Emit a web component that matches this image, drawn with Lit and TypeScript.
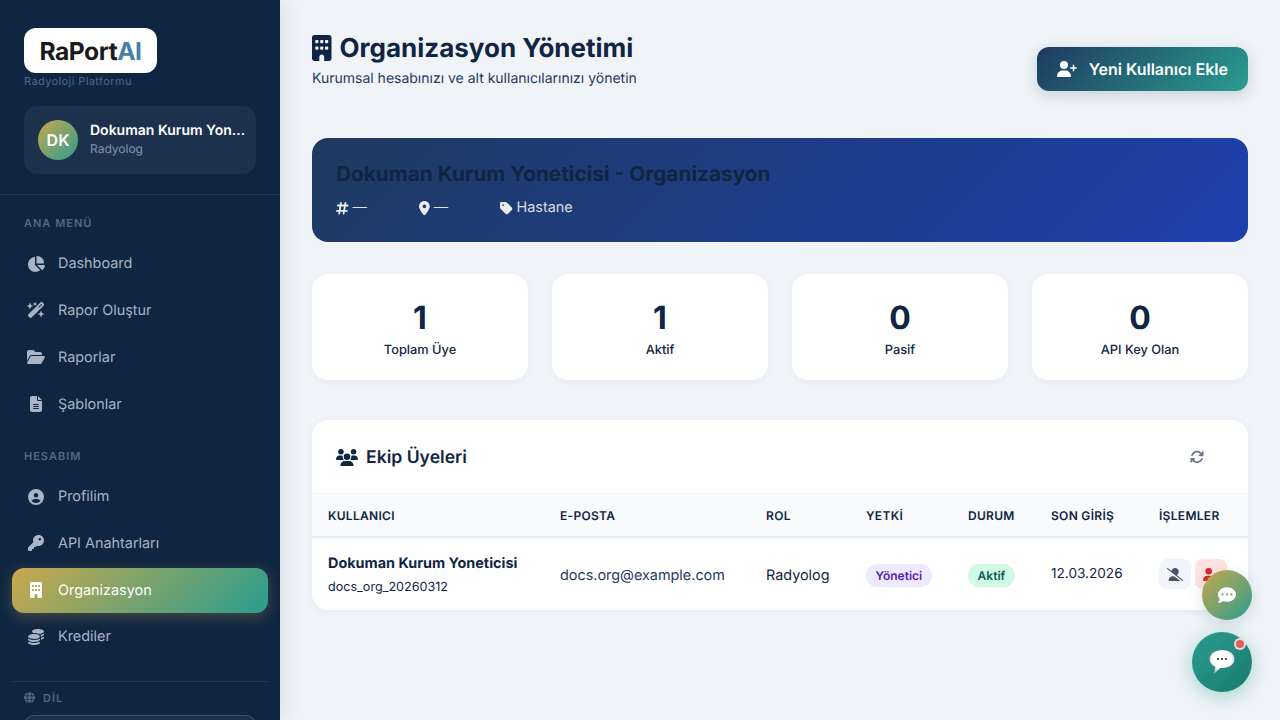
import { LitElement, html, css } from "lit";
import { customElement } from "lit/decorators.js";

const ICONS: Record<string, [string, string]> = {
  building: ["0 0 384 512", "M48 0C21.5 0 0 21.5 0 48V464c0 26.5 21.5 48 48 48h96V432c0-26.5 21.5-48 48-48s48 21.5 48 48v80h96c26.5 0 48-21.5 48-48V48c0-26.5-21.5-48-48-48H48zM64 240c0-8.8 7.2-16 16-16h32c8.8 0 16 7.2 16 16v32c0 8.8-7.2 16-16 16H80c-8.8 0-16-7.2-16-16V240zm112-16h32c8.8 0 16 7.2 16 16v32c0 8.8-7.2 16-16 16H176c-8.8 0-16-7.2-16-16V240c0-8.8 7.2-16 16-16zm80 16c0-8.8 7.2-16 16-16h32c8.8 0 16 7.2 16 16v32c0 8.8-7.2 16-16 16H272c-8.8 0-16-7.2-16-16V240zM80 96h32c8.8 0 16 7.2 16 16v32c0 8.8-7.2 16-16 16H80c-8.8 0-16-7.2-16-16V112c0-8.8 7.2-16 16-16zm80 16c0-8.8 7.2-16 16-16h32c8.8 0 16 7.2 16 16v32c0 8.8-7.2 16-16 16H176c-8.8 0-16-7.2-16-16V112zM272 96h32c8.8 0 16 7.2 16 16v32c0 8.8-7.2 16-16 16H272c-8.8 0-16-7.2-16-16V112c0-8.8 7.2-16 16-16z"],
  pie: ["0 0 576 512", "M304 240V16.6c0-9 7-16.6 16-16.6C443.7 0 544 100.3 544 224c0 9-7.6 16-16.6 16H304zM32 272C32 150.7 122.1 50.3 239 34.3c9.2-1.3 17 6.1 17 15.4V288L412.5 444.5c6.7 6.7 6.2 17.7-1.5 23.1C371.8 495.6 323.8 512 272 512C139.5 512 32 404.6 32 272zm526.4 16c9.3 0 16.6 7.8 15.4 17c-7.7 55.9-34.6 105.6-73.9 142.3c-6 5.6-15.4 5.2-21.2-.7L320 288H558.4z"],
  wand: ["0 0 576 512", "M234.7 42.7L197 56.8c-3 1.1-5 4-5 7.2s2 6.1 5 7.2l37.7 14.1L248.8 123c1.1 3 4 5 7.2 5s6.1-2 7.2-5l14.1-37.7L315 71.2c3-1.1 5-4 5-7.2s-2-6.1-5-7.2L277.3 42.7 263.2 5c-1.1-3-4-5-7.2-5s-6.1 2-7.2 5L234.7 42.7zM46.1 395.4c-18.7 18.7-18.7 49.1 0 67.9l34.6 34.6c18.7 18.7 49.1 18.7 67.9 0L529.9 116.5c18.7-18.7 18.7-49.1 0-67.9L495.3 14.1c-18.7-18.7-49.1-18.7-67.9 0L46.1 395.4zM484.6 82.6l-105 105-23.3-23.3 105-105 23.3 23.3zM7.5 117.2C3 118.9 0 123.2 0 128s3 9.1 7.5 10.8L64 160l21.2 56.5c1.7 4.5 6 7.5 10.8 7.5s9.1-3 10.8-7.5L128 160l56.5-21.2c4.5-1.7 7.5-6 7.5-10.8s-3-9.1-7.5-10.8L128 96 106.8 39.5C105.1 35 100.8 32 96 32s-9.1 3-10.8 7.5L64 96 7.5 117.2zm352 256c-4.5 1.7-7.5 6-7.5 10.8s3 9.1 7.5 10.8L416 416l21.2 56.5c1.7 4.5 6 7.5 10.8 7.5s9.1-3 10.8-7.5L480 416l56.5-21.2c4.5-1.7 7.5-6 7.5-10.8s-3-9.1-7.5-10.8L480 352l-21.2-56.5c-1.7-4.5-6-7.5-10.8-7.5s-9.1 3-10.8 7.5L416 352l-56.5 21.2z"],
  folder: ["0 0 576 512", "M88.7 223.8L0 375.8V96C0 60.7 28.7 32 64 32H181.5c17 0 33.3 6.7 45.3 18.7l26.5 26.5c12 12 28.3 18.7 45.3 18.7H416c35.3 0 64 28.7 64 64v32H144c-22.8 0-43.8 12.1-55.3 31.8zm27.6 16.1C122.1 230 132.6 224 144 224H544c11.5 0 22 6.1 27.7 16.1s5.7 22.2-.1 32.1l-112 192C453.9 474 443.4 480 432 480H32c-11.5 0-22-6.1-27.7-16.1s-5.7-22.2 .1-32.1l112-192z"],
  file: ["0 0 384 512", "M64 0C28.7 0 0 28.7 0 64V448c0 35.3 28.7 64 64 64H320c35.3 0 64-28.7 64-64V160H256c-17.7 0-32-14.3-32-32V0H64zM256 0V128H384L256 0zM112 256H272c8.8 0 16 7.2 16 16s-7.2 16-16 16H112c-8.8 0-16-7.2-16-16s7.2-16 16-16zm0 64H272c8.8 0 16 7.2 16 16s-7.2 16-16 16H112c-8.8 0-16-7.2-16-16s7.2-16 16-16zm0 64H272c8.8 0 16 7.2 16 16s-7.2 16-16 16H112c-8.8 0-16-7.2-16-16s7.2-16 16-16z"],
  profile: ["0 0 512 512", "M399 384.2C376.9 345.8 335.4 320 288 320H224c-47.4 0-88.9 25.8-111 64.2c35.2 39.2 86.2 63.8 143 63.8s107.8-24.7 143-63.8zM0 256a256 256 0 1 1 512 0A256 256 0 1 1 0 256zm256 16a72 72 0 1 0 0-144 72 72 0 1 0 0 144z"],
  key: ["0 0 512 512", "M336 352c97.2 0 176-78.8 176-176S433.2 0 336 0S160 78.8 160 176c0 18.7 2.9 36.8 8.3 53.7L7 391c-4.5 4.5-7 10.6-7 17v80c0 13.3 10.7 24 24 24h80c13.3 0 24-10.7 24-24V448h40c13.3 0 24-10.7 24-24V384h40c6.4 0 12.5-2.5 17-7l33.3-33.3c16.9 5.4 35 8.3 53.7 8.3zM376 96a40 40 0 1 1 0 80 40 40 0 1 1 0-80z"],
  coins: ["0 0 512 512", "M512 80c0 18-14.3 34.6-38.4 48c-29.1 16.1-72.5 27.5-122.3 30.9c-3.7-1.8-7.4-3.5-11.3-5C300.6 137.4 248.2 128 192 128c-8.3 0-16.4 .2-24.5 .6l-1.1-.6C142.3 114.6 128 98 128 80c0-44.2 86-80 192-80S512 35.8 512 80zM160.7 161.1c10.2-.7 20.7-1.1 31.3-1.1c62.2 0 117.4 12.3 152.5 31.4C369.3 204.9 384 221.7 384 240c0 4-.7 7.9-2.1 11.7c-4.6 13.2-17 25.3-35 35.5c-.1 .1-.3 .1-.4 .2c-.3 .2-.6 .3-.9 .5c-35 19.4-90.8 32-153.6 32c-59.6 0-112.9-11.3-148.2-29.1c-1.9-.9-3.7-1.9-5.5-2.9C14.3 274.6 0 258 0 240c0-34.8 53.4-64.5 128-75.4c10.5-1.5 21.4-2.7 32.7-3.5zM416 240c0-21.9-10.6-39.9-24.1-53.4c28.3-4.4 54.2-11.4 76.2-20.5c16.3-6.8 31.5-15.2 43.9-25.5V176c0 19.3-16.5 37.1-43.8 50.9c-14.6 7.4-32.4 13.7-52.4 18.5c.1-1.8 .2-3.5 .2-5.3zm-32 96c0 18-14.3 34.6-38.4 48c-1.8 1-3.6 1.9-5.5 2.9C304.9 404.7 251.6 416 192 416c-62.8 0-118.6-12.6-153.6-32C14.3 370.6 0 354 0 336V300.6c12.5 10.3 27.6 18.7 43.9 25.5C83.4 342.6 135.8 352 192 352s108.6-9.4 148.1-25.9c7.8-3.2 15.3-6.9 22.4-10.9c6.1-3.4 11.8-7.2 17.2-11.2c1.5-1.1 2.9-2.3 4.3-3.4V304v5.7V336zm32 0V304 278.1c19-4.2 36.5-9.5 52.1-16c16.3-6.8 31.5-15.2 43.9-25.5V272c0 10.5-5 21-14.9 30.9c-16.3 16.3-45 29.7-81.3 38.4c.1-1.7 .2-3.5 .2-5.3zM192 448c56.2 0 108.6-9.4 148.1-25.9c16.3-6.8 31.5-15.2 43.9-25.5V432c0 44.2-86 80-192 80S0 476.2 0 432V396.6c12.5 10.3 27.6 18.7 43.9 25.5C83.4 438.6 135.8 448 192 448z"],
  globe: ["0 0 512 512", "M352 256c0 22.2-1.2 43.6-3.3 64H163.3c-2.2-20.4-3.3-41.8-3.3-64s1.2-43.6 3.3-64H348.7c2.2 20.4 3.3 41.8 3.3 64zm28.8-64H503.9c5.3 20.5 8.1 41.9 8.1 64s-2.8 43.5-8.1 64H380.8c2.1-20.6 3.2-42 3.2-64s-1.1-43.4-3.2-64zm112.6-32H376.7c-10-63.9-29.8-117.4-55.3-151.6c78.3 20.7 142 77.5 171.9 151.6zm-149.1 0H167.7c6.1-36.4 15.5-68.6 27-94.7c10.5-23.6 22.2-40.7 33.5-51.5C239.4 3.2 248.7 0 256 0s16.6 3.2 27.8 13.8c11.3 10.8 23 27.9 33.5 51.5c11.6 26 20.9 58.2 27 94.7zm-209 0H18.6C48.6 85.9 112.2 29.1 190.6 8.4C165.1 42.6 145.3 96.1 135.3 160zM8.1 192H131.2c-2.1 20.6-3.2 42-3.2 64s1.1 43.4 3.2 64H8.1C2.8 299.5 0 278.1 0 256s2.8-43.5 8.1-64zM194.7 446.6c-11.6-26-20.9-58.2-27-94.6H344.3c-6.1 36.4-15.5 68.6-27 94.6c-10.5 23.6-22.2 40.7-33.5 51.5C272.6 508.8 263.3 512 256 512s-16.6-3.2-27.8-13.8c-11.3-10.8-23-27.9-33.5-51.5zM135.3 352c10 63.9 29.8 117.4 55.3 151.6C112.2 482.9 48.6 426.1 18.6 352H135.3zm358.1 0c-30 74.1-93.6 130.9-171.9 151.6c25.5-34.2 45.2-87.7 55.3-151.6H493.4z"],
  userPlus: ["0 0 640 512", "M96 128a128 128 0 1 1 256 0A128 128 0 1 1 96 128zM0 482.3C0 383.8 79.8 304 178.3 304h91.4C368.2 304 448 383.8 448 482.3c0 16.4-13.3 29.7-29.7 29.7H29.7C13.3 512 0 498.7 0 482.3zM504 312V248H440c-13.3 0-24-10.7-24-24s10.7-24 24-24h64V136c0-13.3 10.7-24 24-24s24 10.7 24 24v64h64c13.3 0 24 10.7 24 24s-10.7 24-24 24H552v64c0 13.3-10.7 24-24 24s-24-10.7-24-24z"],
  hash: ["0 0 448 512", "M181.3 32.4c17.4 2.9 29.2 19.4 26.3 36.8L197.8 128h95.1l11.5-69.3c2.9-17.4 19.4-29.2 36.8-26.3s29.2 19.4 26.3 36.8L357.8 128H416c17.7 0 32 14.3 32 32s-14.3 32-32 32H347.1L325.8 320H384c17.7 0 32 14.3 32 32s-14.3 32-32 32H315.1l-11.5 69.3c-2.9 17.4-19.4 29.2-36.8 26.3s-29.2-19.4-26.3-36.8l9.8-58.7H155.1l-11.5 69.3c-2.9 17.4-19.4 29.2-36.8 26.3s-29.2-19.4-26.3-36.8L90.2 384H32c-17.7 0-32-14.3-32-32s14.3-32 32-32h68.9l21.3-128H64c-17.7 0-32-14.3-32-32s14.3-32 32-32h68.9l11.5-69.3c2.9-17.4 19.4-29.2 36.8-26.3zM187.1 192L165.8 320h95.1l21.3-128H187.1z"],
  pin: ["0 0 384 512", "M215.7 499.2C267 435 384 279.4 384 192C384 86 298 0 192 0S0 86 0 192c0 87.4 117 243 168.3 307.2c12.3 15.3 35.1 15.3 47.4 0zM192 128a64 64 0 1 1 0 128 64 64 0 1 1 0-128z"],
  tag: ["0 0 448 512", "M0 80V229.5c0 17 6.7 33.3 18.7 45.3l176 176c25 25 65.5 25 90.5 0L418.7 317.3c25-25 25-65.5 0-90.5l-176-176c-12-12-28.3-18.7-45.3-18.7H48C21.5 32 0 53.5 0 80zm112 32a32 32 0 1 1 0 64 32 32 0 1 1 0-64z"],
  users: ["0 0 640 512", "M144 0a80 80 0 1 1 0 160A80 80 0 1 1 144 0zM512 0a80 80 0 1 1 0 160A80 80 0 1 1 512 0zM0 298.7C0 239.8 47.8 192 106.7 192h42.7c15.9 0 31 3.5 44.6 9.7c-1.3 7.2-1.9 14.7-1.9 22.3c0 38.2 16.8 72.5 43.3 96c-.2 0-.4 0-.7 0H21.3C9.6 320 0 310.4 0 298.7zM405.3 320c-.2 0-.4 0-.7 0c26.6-23.5 43.3-57.8 43.3-96c0-7.6-.7-15-1.9-22.3c13.6-6.3 28.7-9.7 44.6-9.7h42.7C592.2 192 640 239.8 640 298.7c0 11.8-9.6 21.3-21.3 21.3H405.3zM224 224a96 96 0 1 1 192 0 96 96 0 1 1 -192 0zM128 485.3C128 411.7 187.7 352 261.3 352H378.7C452.3 352 512 411.7 512 485.3c0 14.7-11.9 26.7-26.7 26.7H154.7c-14.7 0-26.7-11.9-26.7-26.7z"],
  sync: ["0 0 512 512", "M105.1 202.6c7.7-21.8 20.2-42.3 37.8-59.8c62.5-62.5 163.8-62.5 226.3 0L386.3 160H352c-17.7 0-32 14.3-32 32s14.3 32 32 32H463.5c0 0 0 0 0 0h.4c17.7 0 32-14.3 32-32V80c0-17.7-14.3-32-32-32s-32 14.3-32 32v35.2L414.4 97.6c-87.5-87.5-229.3-87.5-316.8 0C73.2 122 55.6 150.7 44.8 181.4c-5.9 16.7 2.9 34.9 19.5 40.8s34.9-2.9 40.8-19.5zM39 289.3c-5 1.5-9.8 4.2-13.7 8.2c-4 4-6.7 8.8-8.1 14c-.3 1.2-.6 2.5-.8 3.8c-.3 1.7-.4 3.4-.4 5.1V432c0 17.7 14.3 32 32 32s32-14.3 32-32V396.9l17.6 17.5c87.5 87.4 229.3 87.4 316.7 0c24.4-24.4 42.1-53.1 52.9-83.7c5.9-16.7-2.9-34.9-19.5-40.8s-34.9 2.9-40.8 19.5c-7.7 21.8-20.2 42.3-37.8 59.8c-62.5 62.5-163.8 62.5-226.3 0l-.1-.1L125.6 352H160c17.7 0 32-14.3 32-32s-14.3-32-32-32H48.4c-1.6 0-3.2 .1-4.8 .3s-3.1 .5-4.6 1z"],
  userSlash: ["0 0 640 512", "M38.8 5.1C28.4-3.1 13.3-1.2 5.1 9.2S-1.2 34.7 9.2 42.9l592 464c10.4 8.2 25.5 6.3 33.7-4.1s6.3-25.5-4.1-33.7L381.9 274c48.5-23.2 82.1-72.7 82.1-130C464 64.5 399.5 0 320 0C250.4 0 192.4 49.3 178.9 114.9L38.8 5.1zM545.5 512H528L284.3 320h-59C136.2 320 64 392.2 64 481.3c0 17 13.8 30.7 30.7 30.7H545.3l.3 0z"],
  userMinus: ["0 0 640 512", "M96 128a128 128 0 1 1 256 0A128 128 0 1 1 96 128zM0 482.3C0 383.8 79.8 304 178.3 304h91.4C368.2 304 448 383.8 448 482.3c0 16.4-13.3 29.7-29.7 29.7H29.7C13.3 512 0 498.7 0 482.3zM472 200H616c13.3 0 24 10.7 24 24s-10.7 24-24 24H472c-13.3 0-24-10.7-24-24s10.7-24 24-24z"],
  dots: ["0 0 512 512", "M256 448c141.4 0 256-93.1 256-208S397.4 32 256 32S0 125.1 0 240c0 45.1 17.7 86.8 47.7 120.9c-1.9 24.5-11.4 46.3-21.4 62.9c-5.5 9.2-11.1 16.6-15.2 21.6c-2.1 2.5-3.7 4.4-4.9 5.7c-.6 .6-1 1.1-1.3 1.4l-.3 .3c-4.6 4.6-5.9 11.4-3.4 17.4c2.5 6 8.3 9.9 14.8 9.9c28.7 0 57.6-8.9 81.6-19.3c22.9-10 42.4-21.9 54.3-30.6c31.8 11.5 67 17.9 104.1 17.9zM128 208a32 32 0 1 1 0 64 32 32 0 1 1 0-64zm128 0a32 32 0 1 1 0 64 32 32 0 1 1 0-64zm96 32a32 32 0 1 1 64 0 32 32 0 1 1 -64 0z"],
};

const icon = (name: string, cls = "") => {
  const [vb, d] = ICONS[name];
  return html`<svg class="ic ${cls}" viewBox=${vb} fill="currentColor" aria-hidden="true"><path d=${d}></path></svg>`;
};

const MENU = [
  { label: "Dashboard", ic: "pie" },
  { label: "Rapor Oluştur", ic: "wand" },
  { label: "Raporlar", ic: "folder" },
  { label: "Şablonlar", ic: "file" },
];
const ACCOUNT = [
  { label: "Profilim", ic: "profile" },
  { label: "API Anahtarları", ic: "key" },
  { label: "Organizasyon", ic: "building", active: true },
  { label: "Krediler", ic: "coins" },
];
const STATS = [
  ["1", "Toplam Üye"],
  ["1", "Aktif"],
  ["0", "Pasif"],
  ["0", "API Key Olan"],
];

@customElement("app-root")
export class AppRoot extends LitElement {
  static styles = css`
    :host {
      display: flex;
      height: 720px;
      overflow: hidden;
      background: #f0f4f8;
      color: #0f2542;
      font-family: Inter, "Noto Sans", sans-serif;
      text-rendering: geometricPrecision;
    }
    .ic { display: block; height: 1em; width: auto; flex: none; }

    .sidebar {
      width: 280px;
      flex: none;
      height: 720px;
      overflow: hidden;
      background: #0f2542;
      box-shadow: 4px 0 20px rgba(15, 37, 66, 0.1);
    }
    .brand {
      padding: 28px 24px 20px;
      border-bottom: 1px solid rgba(255, 255, 255, 0.08);
    }
    .logo {
      width: 133px;
      height: 45px;
      box-sizing: border-box;
      background: #fff;
      border-radius: 12px;
      display: flex;
      align-items: center;
      justify-content: center;
      font-size: 24.6px;
      font-weight: 700;
      letter-spacing: -0.5px;
      color: #1a1a1a;
    }
    .logo span { color: #4a7fa5; }
    .tagline {
      font-size: 11px;
      line-height: 16px;
      letter-spacing: 0.4px;
      color: #566883;
    }
    .user {
      margin-top: 17px;
      height: 68px;
      box-sizing: border-box;
      padding: 14px 10px 14px 14px;
      display: flex;
      align-items: center;
      gap: 12px;
      background: rgba(255, 255, 255, 0.06);
      border-radius: 14px;
    }
    .avatar {
      width: 40px;
      height: 40px;
      flex: none;
      border-radius: 50%;
      background: linear-gradient(135deg, #c9a84c, #2a9d8f);
      color: #fff;
      font-size: 16px;
      font-weight: 600;
      display: flex;
      align-items: center;
      justify-content: center;
    }
    .user-text { min-width: 0; flex: 1; padding-bottom: 1px; }
    .user-name {
      font-size: 14px;
      line-height: 18px;
      font-weight: 600;
      color: #fff;
      white-space: nowrap;
      overflow: hidden;
      text-overflow: ellipsis;
    }
    .user-role { font-size: 12px; line-height: 18px; color: #8494ab; }

    nav { padding: 20px 12px 0; }
    .section {
      padding: 0 12px;
      margin-bottom: 10.3px;
      font-size: 11px;
      line-height: 16px;
      font-weight: 600;
      letter-spacing: 1px;
      color: #566883;
    }
    .group { margin-bottom: 21.4px; }
    .item {
      height: 44.8px;
      margin-bottom: 2px;
      padding: 0 14px;
      display: flex;
      align-items: center;
      gap: 12px;
      border-radius: 12px;
      font-size: 14.4px;
      font-weight: 400;
      color: #a9b4c4;
    }
    .item .ic-box {
      width: 20px;
      display: flex;
      justify-content: center;
      font-size: 16px;
    }
    .item.active {
      color: #fff;
      background: linear-gradient(135deg, #c9a84c, #2a9d8f);
      box-shadow: 0 4px 15px rgba(201, 168, 76, 0.3);
    }
    .lang {
      margin: 21.4px 12px 0;
      padding: 8px 12px 0;
      border-top: 1px solid rgba(255, 255, 255, 0.08);
    }
    .lang-label {
      display: flex;
      align-items: center;
      gap: 8px;
      font-size: 11px;
      line-height: 16px;
      font-weight: 600;
      letter-spacing: 1px;
      color: #566883;
    }
    .lang-select {
      margin-top: 9px;
      height: 36px;
      border: 1px solid rgba(255, 255, 255, 0.15);
      border-radius: 10px;
      background: rgba(255, 255, 255, 0.05);
    }

    main {
      flex: 1;
      min-width: 0;
      padding: 32px;
    }
    .head {
      display: flex;
      align-items: flex-start;
      justify-content: space-between;
      margin-bottom: 46px;
      height: 60px;
    }
    h1 {
      margin: 0;
      padding-top: 1px;
      display: flex;
      align-items: center;
      gap: 8px;
      font-size: 26px;
      line-height: 32px;
      font-weight: 700;
      color: #0f2542;
    }
    h1 .ic { margin-top: -2px; }
    .head p {
      margin: 4px 0 0;
      font-size: 14px;
      line-height: 20px;
      color: #1e3a5f;
    }
    .add {
      margin-top: 15px;
      height: 44px;
      padding: 0 20px;
      display: flex;
      align-items: center;
      gap: 12px;
      border: 0;
      border-radius: 12px;
      background: linear-gradient(135deg, #1e3a5f, #2a9d8f);
      color: #fff;
      font: 600 16px Inter, sans-serif;
      text-rendering: geometricPrecision;
      box-shadow: 0 4px 15px rgba(30, 58, 95, 0.2);
      white-space: nowrap;
    }

    .org {
      height: 104px;
      box-sizing: border-box;
      padding: 25px 24px 0;
      border-radius: 16px;
      background: linear-gradient(135deg, #1e3a5f, #1e40af);
      margin-bottom: 32px;
    }
    .org h2 {
      margin: 0;
      font-size: 20.8px;
      line-height: 24px;
      font-weight: 700;
      color: #0f2542;
    }
    .meta {
      margin-top: 11px;
      display: flex;
      gap: 32px;
      font-size: 14.4px;
      line-height: 20px;
      color: rgba(255, 255, 255, 0.85);
    }
    .meta span { display: flex; align-items: center; gap: 4px; min-width: 49px; }
    .meta span:first-child { min-width: 51px; }
    .meta .ic { color: #fff; opacity: 0.9; }

    .stats {
      display: grid;
      grid-template-columns: repeat(4, 1fr);
      gap: 24px;
      margin-bottom: 40px;
    }
    .stat {
      height: 106px;
      box-sizing: border-box;
      padding-top: 25px;
      background: #fff;
      border-radius: 16px;
      text-align: center;
      box-shadow: 0 2px 8px rgba(15, 37, 66, 0.04);
    }
    .stat b {
      display: block;
      font-size: 32px;
      line-height: 38px;
      font-weight: 700;
      color: #0f2542;
    }
    .stat small {
      display: block;
      margin-top: 6px;
      font-size: 12.8px;
      line-height: 16px;
      font-weight: 500;
      color: #0f2542;
    }

    .team {
      background: #fff;
      border-radius: 16px;
      overflow: hidden;
      box-shadow: 0 2px 8px rgba(15, 37, 66, 0.05);
    }
    .team-head {
      height: 74px;
      box-sizing: border-box;
      padding: 0 24px;
      display: flex;
      align-items: center;
      justify-content: space-between;
      border-bottom: 1px solid #f1f5f9;
    }
    .team-head h3 {
      margin: 0;
      padding-top: 2px;
      display: flex;
      align-items: center;
      gap: 8px;
      font-size: 17.6px;
      font-weight: 600;
      color: #0f2542;
    }
    .refresh {
      margin-right: 20px;
      font-size: 14px;
      color: #6b7787;
    }
    table {
      width: 100%;
      border-collapse: collapse;
      table-layout: fixed;
    }
    th {
      height: 42px;
      padding: 0 16px;
      text-align: left;
      background: #f8fafc;
      border-bottom: 2px solid #e8edf3;
      font-size: 12px;
      font-weight: 600;
      letter-spacing: 0.3px;
      color: #0f2542;
      white-space: nowrap;
    }
    td {
      height: 69px;
      padding: 3px 16px 0;
      font-size: 14.4px;
      color: #1e3a5f;
      white-space: nowrap;
    }
    td.role { color: #0f2542; }
    td.date { font-size: 13.6px; color: #0f2542; padding: 0 16px 1px; }
    td.tools { padding: 0 16px; }
    .name { font-weight: 700; color: #0f2542; line-height: 20px; }
    .login { font-size: 12.6px; color: #0f2542; line-height: 18px; margin-top: 5px; }
    .pill {
      display: inline-block;
      padding: 0 9.6px;
      height: 23px;
      line-height: 23px;
      border-radius: 20px;
      font-size: 12px;
      font-weight: 600;
    }
    .pill.admin { background: #ede9fe; color: #5b21b6; }
    .pill.on { background: #d1fae5; color: #065f46; }
    .acts { display: flex; gap: 4px; }
    .act {
      width: 32px;
      height: 30px;
      border: 0;
      padding: 0;
      border-radius: 8px;
      display: flex;
      align-items: center;
      justify-content: center;
      font-size: 13px;
    }
    .act.mute { background: #f1f5f9; color: #475569; }
    .act.del { background: #fee2e2; color: #dc2626; }

    .fab {
      position: fixed;
      right: 28px;
      border-radius: 50%;
      display: flex;
      align-items: center;
      justify-content: center;
      color: #fff;
    }
    .fab.small {
      bottom: 100px;
      width: 50px;
      height: 50px;
      background: linear-gradient(135deg, #c9a84c, #2a9d8f);
      box-shadow: 0 4px 15px rgba(15, 37, 66, 0.15);
      font-size: 18px;
    }
    .fab.big {
      bottom: 28px;
      width: 60px;
      height: 60px;
      background: linear-gradient(135deg, #2a9d8f, #1a7a6e);
      box-shadow: 0 4px 20px rgba(42, 157, 143, 0.4);
    }
    .bubble { width: 28px; height: 28px; display: block; }
    .dot {
      position: absolute;
      top: 6px;
      right: 6px;
      width: 8px;
      height: 8px;
      border-radius: 50%;
      background: #d9605f;
      border: 2px solid rgba(255, 255, 255, 0.75);
    }
  `;

  renderItem(it: { label: string; ic: string; active?: boolean }) {
    return html`<div class="item ${it.active ? "active" : ""}">
      <span class="ic-box">${icon(it.ic)}</span>${it.label}
    </div>`;
  }

  render() {
    return html`
      <aside class="sidebar">
        <div class="brand">
          <div class="logo">RaPort<span>AI</span></div>
          <div class="tagline">Radyoloji Platformu</div>
          <div class="user">
            <div class="avatar">DK</div>
            <div class="user-text">
              <div class="user-name">Dokuman Kurum Yoneticisi</div>
              <div class="user-role">Radyolog</div>
            </div>
          </div>
        </div>
        <nav>
          <div class="group">
            <div class="section">ANA MENÜ</div>
            ${MENU.map((m) => this.renderItem(m))}
          </div>
          <div class="group">
            <div class="section">HESABIM</div>
            ${ACCOUNT.map((m) => this.renderItem(m))}
          </div>
        </nav>
        <div class="lang">
          <div class="lang-label">${icon("globe")}DİL</div>
          <div class="lang-select"></div>
        </div>
      </aside>

      <main>
        <div class="head">
          <div>
            <h1>${icon("building")}Organizasyon Yönetimi</h1>
            <p>Kurumsal hesabınızı ve alt kullanıcılarınızı yönetin</p>
          </div>
          <button class="add">${icon("userPlus")}Yeni Kullanıcı Ekle</button>
        </div>

        <section class="org">
          <h2>Dokuman Kurum Yoneticisi - Organizasyon</h2>
          <div class="meta">
            <span>${icon("hash")}—</span>
            <span>${icon("pin")}—</span>
            <span>${icon("tag")}Hastane</span>
          </div>
        </section>

        <section class="stats">
          ${STATS.map(
            ([n, l]) => html`<div class="stat"><b>${n}</b><small>${l}</small></div>`
          )}
        </section>

        <section class="team">
          <div class="team-head">
            <h3>${icon("users")}Ekip Üyeleri</h3>
            <span class="refresh">${icon("sync")}</span>
          </div>
          <table>
            <colgroup>
              <col style="width:232px" /><col style="width:206px" /><col style="width:100px" />
              <col style="width:102px" /><col style="width:83px" /><col style="width:108px" /><col />
            </colgroup>
            <thead>
              <tr>
                <th>KULLANICI</th><th>E-POSTA</th><th>ROL</th><th>YETKİ</th>
                <th>DURUM</th><th>SON GİRİŞ</th><th>İŞLEMLER</th>
              </tr>
            </thead>
            <tbody>
              <tr>
                <td>
                  <div class="name">Dokuman Kurum Yoneticisi</div>
                  <div class="login">docs_org_20260312</div>
                </td>
                <td>docs.org@example.com</td>
                <td class="role">Radyolog</td>
                <td><span class="pill admin">Yönetici</span></td>
                <td><span class="pill on">Aktif</span></td>
                <td class="date">12.03.2026</td>
                <td class="tools">
                  <div class="acts">
                    <button class="act mute">${icon("userSlash")}</button>
                    <button class="act del">${icon("userMinus")}</button>
                  </div>
                </td>
              </tr>
            </tbody>
          </table>
        </section>
      </main>

      <div class="fab small">${icon("dots")}</div>
      <div class="fab big">
        <svg class="bubble" viewBox="0 0 28 28" aria-hidden="true">
          <defs>
            <radialGradient id="bub" cx="50%" cy="42%" r="56%">
              <stop offset="68%" stop-color="#fff"></stop>
              <stop offset="100%" stop-color="#b5b5b5"></stop>
            </radialGradient>
          </defs>
          <path d="M14 2c7 0 12.500 3.800 12.500 9S21 20 14 20h-1.500L5.500 26l2-7.200C4 17.200 1.500 14.400 1.500 11 1.500 5.800 7 2 14 2z" fill="url(#bub)"></path>
          <circle cx="10" cy="11" r="1.100" fill="#333"></circle>
          <circle cx="14" cy="11" r="1.100" fill="#333"></circle>
          <circle cx="18" cy="11" r="1.100" fill="#333"></circle>
        </svg>
        <span class="dot"></span>
      </div>
    `;
  }
}
